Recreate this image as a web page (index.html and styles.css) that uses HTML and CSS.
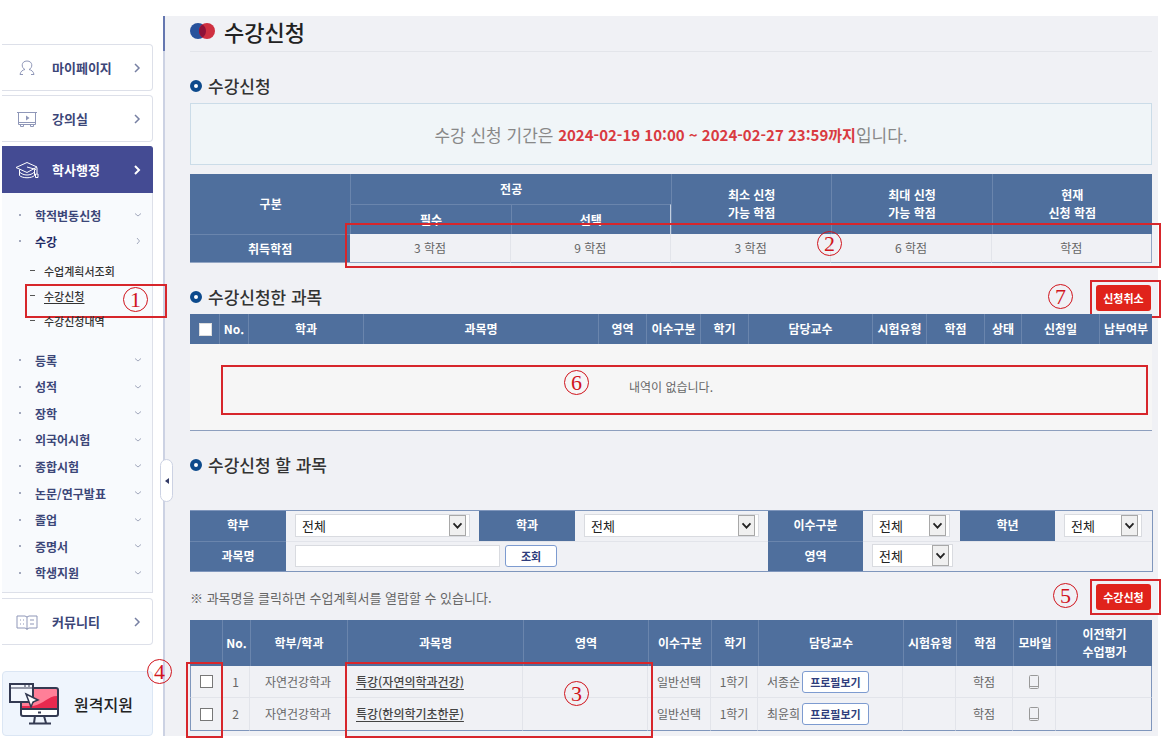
FILE: index.html
```html
<!DOCTYPE html>
<html lang="ko">
<head>
    <meta charset="UTF-8">
    <title>수강신청</title>
    <link rel="stylesheet" href="styles.css">
</head>
<body>
    <div class="page">
        <nav class="sidebar">
            <a href="#" class="menu-item">
                <svg class="menu-icon" viewBox="0 0 24 20"><path d="M10 11.500C6 10 6 3 12 3s6 7 2 8.500c2.500.5 4.500 2 5 5h-3M10 11.500c-2.500.5-4.500 2-5 5h3"/></svg>
                <span class="menu-text">마이페이지</span>
                <svg class="arrow" viewBox="0 0 8 10"><path d="M2 1l4 4-4 4"/></svg>
            </a>
            <a href="#" class="menu-item">
                <svg class="menu-icon" viewBox="0 0 24 20"><path d="M3.500 3.500h17v12h-17zM2 3.500h20M5.500 15.500v2h3v-2M15.500 15.500v2h3v-2M3.500 13.500h17"/><path class="solid" d="M11 6.500l3.500 2.500-3.500 2.500z"/></svg>
                <span class="menu-text">강의실</span>
                <svg class="arrow" viewBox="0 0 8 10"><path d="M2 1l4 4-4 4"/></svg>
            </a>
            <a href="#" class="menu-item active">
                <svg class="menu-icon" viewBox="0 0 24 20"><path d="M1 7.500L12 2.500l10 4.500-10 5.500zM4.500 9.500v6c3 3 12 3 15 0v-6M22 7.500v6M20.500 14h2.500v3.500h-2.500zM12 7l9 2.500M4.500 12c4 4 11 4 15 0"/></svg>
                <span class="menu-text">학사행정</span>
                <svg class="arrow" viewBox="0 0 8 10"><path d="M2 1l4 4-4 4"/></svg>
            </a>
            <div class="submenu">
                <ul class="sub-top">
                    <li><a href="#">학적변동신청</a><svg class="chev" viewBox="0 0 8 6"><path d="M1 1.500l3 2.500 3-2.500"/></svg></li>
                    <li class="open"><a href="#">수강</a><svg class="chev" viewBox="0 0 8 6"><path d="M3 0l2.500 3L3 6"/></svg></li>
                </ul>
                <ul class="sub-detail">
                    <li><a href="#">수업계획서조회</a></li>
                    <li class="current"><a href="#">수강신청</a><div class="mark mark1"><span class="num num1">1</span></div></li>
                    <li><a href="#">수강신청내역</a></li>
                </ul>
                <ul class="sub-list">
                    <li><a href="#">등록</a><svg class="chev" viewBox="0 0 8 6"><path d="M1 1.500l3 2.500 3-2.500"/></svg></li>
                    <li><a href="#">성적</a><svg class="chev" viewBox="0 0 8 6"><path d="M1 1.500l3 2.500 3-2.500"/></svg></li>
                    <li><a href="#">장학</a><svg class="chev" viewBox="0 0 8 6"><path d="M1 1.500l3 2.500 3-2.500"/></svg></li>
                    <li><a href="#">외국어시험</a><svg class="chev" viewBox="0 0 8 6"><path d="M1 1.500l3 2.500 3-2.500"/></svg></li>
                    <li><a href="#">종합시험</a><svg class="chev" viewBox="0 0 8 6"><path d="M1 1.500l3 2.500 3-2.500"/></svg></li>
                    <li><a href="#">논문/연구발표</a><svg class="chev" viewBox="0 0 8 6"><path d="M1 1.500l3 2.500 3-2.500"/></svg></li>
                    <li><a href="#">졸업</a><svg class="chev" viewBox="0 0 8 6"><path d="M1 1.500l3 2.500 3-2.500"/></svg></li>
                    <li><a href="#">증명서</a><svg class="chev" viewBox="0 0 8 6"><path d="M1 1.500l3 2.500 3-2.500"/></svg></li>
                    <li><a href="#">학생지원</a><svg class="chev" viewBox="0 0 8 6"><path d="M1 1.500l3 2.500 3-2.500"/></svg></li>
                </ul>
            </div>
            <a href="#" class="menu-item">
                <svg class="menu-icon" viewBox="0 0 24 20"><path d="M12 5v13M2 4h8l2 1 2-1h8v12h-8l-2 1-2-1H2zM5 8h1M8 8h1M5 12h1M8 12h1M15 8h4M15 12h4"/></svg>
                <span class="menu-text">커뮤니티</span>
                <svg class="arrow" viewBox="0 0 8 10"><path d="M2 1l4 4-4 4"/></svg>
            </a>
            <a href="#" class="remote">
                <svg class="remote-icon" viewBox="0 0 50 42">
                    <rect x="12" y="5" width="37" height="28" rx="2" fill="#e8294f"/>
                    <path d="M13 6h35v7c-9 0-13 8-24 10H13z" fill="#ff7f98"/>
                    <path d="M12 26h37v5a2 2 0 0 1-2 2H14a2 2 0 0 1-2-2z" fill="#fff"/>
                    <rect x="12" y="5" width="37" height="28" rx="2" fill="none" stroke="#343a52" stroke-width="2"/>
                    <path d="M12 26h37M29 29.500h3M26 33l-1 7M35 33l2 7M20 40.500h22" fill="none" stroke="#343a52" stroke-width="2"/>
                    <path d="M1 1h23v18H1z" fill="#f4f7fd" stroke="#343a52" stroke-width="2"/>
                    <path d="M1 5h23M15 3h2M19 3h2" stroke="#343a52"/>
                    <path d="M17 11l12 6-5 2-2 5z" fill="#fff" stroke="#343a52" stroke-width="1.500"/>
                </svg>
                <span>원격지원</span>
            </a>
            <button type="button" class="fold" aria-label="메뉴 접기"><svg viewBox="0 0 4 6"><path d="M4 0v6L0 3z"/></svg></button>
        </nav>

        <main class="content">
            <h1>
                <svg class="logo" viewBox="0 0 25 16"><circle cx="8" cy="8" r="8" fill="#28529c"/><circle cx="17" cy="8" r="8" fill="#cf3040"/><path d="M12.500 1.400a8 8 0 0 1 0 13.200a8 8 0 0 1 0-13.200z" fill="#8e1238"/></svg>
                수강신청
            </h1>

            <div class="section-head"><h2>수강신청</h2></div>
            <div class="notice">수강 신청 기간은&nbsp;<strong>2024-02-19 10:00 ~ 2024-02-27 23:59까지</strong>입니다.</div>

            <div class="table-box credit">
                <table>
                    <thead>
                        <tr><th rowspan="2">구분</th><th colspan="2">전공</th><th rowspan="2">최소 신청<br>가능 학점</th><th rowspan="2">최대 신청<br>가능 학점</th><th rowspan="2">현재<br>신청 학점</th></tr>
                        <tr><th>필수</th><th>선택</th></tr>
                    </thead>
                    <tbody>
                        <tr><th>취득학점</th><td>3 학점</td><td>9 학점</td><td>3 학점</td><td>6 학점</td><td>학점</td></tr>
                    </tbody>
                </table>
                <div class="mark mark2"><span class="num num2">2</span></div>
            </div>

            <div class="section-head">
                <h2>수강신청한 과목</h2>
                <div class="btn-box"><button type="button" class="btn-red">신청취소</button><div class="mark mark7"><span class="num num7">7</span></div></div>
            </div>
            <div class="table-box applied">
                <table>
                    <colgroup><col width="29"><col width="29"><col width="115"><col width="235"><col width="48"><col width="54"><col width="48"><col width="124"><col width="54"><col width="58"><col width="37"><col width="78"><col width="53"></colgroup>
                    <thead>
                        <tr><th><input type="checkbox" aria-label="전체 선택"></th><th>No.</th><th>학과</th><th>과목명</th><th>영역</th><th>이수구분</th><th>학기</th><th>담당교수</th><th>시험유형</th><th>학점</th><th>상태</th><th>신청일</th><th>납부여부</th></tr>
                    </thead>
                    <tbody>
                        <tr><td colspan="13">내역이 없습니다.</td></tr>
                    </tbody>
                </table>
                <div class="mark mark6"><span class="num num6">6</span></div>
            </div>

            <div class="section-head"><h2>수강신청 할 과목</h2></div>
            <form class="search">
                <table>
                    <colgroup><col width="96"><col width="193"><col width="96"><col width="193"><col width="95"><col width="97"><col width="95"><col width="97"></colgroup>
                    <tr>
                        <th><label for="dept">학부</label></th>
                        <td><span class="select wide"><select id="dept"><option>전체</option></select><svg viewBox="0 0 17 21"><path d="M4 8l4.500 5L13 8"/></svg></span></td>
                        <th><label for="major">학과</label></th>
                        <td><span class="select wide"><select id="major"><option>전체</option></select><svg viewBox="0 0 17 21"><path d="M4 8l4.500 5L13 8"/></svg></span></td>
                        <th><label for="type">이수구분</label></th>
                        <td><span class="select"><select id="type"><option>전체</option></select><svg viewBox="0 0 17 21"><path d="M4 8l4.500 5L13 8"/></svg></span></td>
                        <th><label for="grade">학년</label></th>
                        <td><span class="select"><select id="grade"><option>전체</option></select><svg viewBox="0 0 17 21"><path d="M4 8l4.500 5L13 8"/></svg></span></td>
                    </tr>
                    <tr>
                        <th><label for="subject">과목명</label></th>
                        <td colspan="3"><div class="search-row"><input type="text" id="subject"><button type="button" class="btn-line">조회</button></div></td>
                        <th><label for="area">영역</label></th>
                        <td colspan="3"><span class="select area"><select id="area"><option>전체</option></select><svg viewBox="0 0 17 21"><path d="M4 8l4.500 5L13 8"/></svg></span></td>
                    </tr>
                </table>
            </form>

            <div class="guide">
                <p>※ 과목명을 클릭하면 수업계획서를 열람할 수 있습니다.</p>
                <div class="btn-box"><button type="button" class="btn-red">수강신청</button><div class="mark mark5"><span class="num num5">5</span></div></div>
            </div>
            <div class="table-box courses">
                <table>
                    <colgroup><col width="32"><col width="28"><col width="97"><col width="176"><col width="125"><col width="63"><col width="47"><col width="145"><col width="53"><col width="57"><col width="43"><col width="96"></colgroup>
                    <thead>
                        <tr><th></th><th>No.</th><th>학부/학과</th><th>과목명</th><th>영역</th><th>이수구분</th><th>학기</th><th>담당교수</th><th>시험유형</th><th>학점</th><th>모바일</th><th>이전학기<br>수업평가</th></tr>
                    </thead>
                    <tbody>
                        <tr><td><input type="checkbox" aria-label="특강(자연의학과건강) 선택"></td><td>1</td><td>자연건강학과</td><td class="left"><a href="#">특강(자연의학과건강)</a></td><td></td><td>일반선택</td><td>1학기</td><td class="left"><div class="prof">서종순<button type="button" class="btn-line">프로필보기</button></div></td><td></td><td>학점</td><td><svg class="mobile" viewBox="0 0 10 14"><rect x=".5" y=".5" width="9" height="13" rx="1"/><path d="M1 11.500h8"/></svg></td><td></td></tr>
                        <tr><td><input type="checkbox" aria-label="특강(한의학기초한문) 선택"></td><td>2</td><td>자연건강학과</td><td class="left"><a href="#">특강(한의학기초한문)</a></td><td></td><td>일반선택</td><td>1학기</td><td class="left"><div class="prof">최윤희<button type="button" class="btn-line">프로필보기</button></div></td><td></td><td>학점</td><td><svg class="mobile" viewBox="0 0 10 14"><rect x=".5" y=".5" width="9" height="13" rx="1"/><path d="M1 11.500h8"/></svg></td><td></td></tr>
                    </tbody>
                </table>
                <div class="mark mark3"><span class="num num3">3</span></div>
                <div class="mark mark4"><span class="num num4">4</span></div>
            </div>
        </main>
    </div>
</body>
</html>
```
FILE: styles.css
```css
*, *::before, *::after {
    box-sizing: border-box;
}
body {
    margin: 0;
    padding: 16px 12px 12px 0;
    background: #fff;
    font-family: "Noto Sans CJK KR", sans-serif;
    font-size: 12px;
    color: #666;
}
h1, h2, p, ul {
    margin: 0;
    padding: 0;
}
ul {
    list-style: none;
}
a {
    color: inherit;
    text-decoration: none;
}
button, input, select {
    font-family: inherit;
    margin: 0;
}
.page {
    display: flex;
}

/* sidebar */
.sidebar {
    position: relative;
    flex: none;
    width: 165px;
    padding: 28px 10px 0 2px;
    border-right: 2px solid #ccd2e3;
    color: #3c4678;
}
.sidebar::after {
    content: "";
    position: absolute;
    top: 0;
    right: -2px;
    width: 2px;
    height: 35px;
    background: #6577b0;
}
.menu-item {
    display: flex;
    align-items: center;
    height: 47px;
    margin-bottom: 4px;
    padding: 0 11px 0 13px;
    border: 1px solid #dde0e9;
    border-left: 0;
    border-radius: 0 4px 4px 0;
    font-size: 13px;
    font-weight: 700;
}
.menu-item.active {
    margin-bottom: 0;
    background: #444b93;
    border-color: #444b93;
    border-radius: 0 3px 0 0;
    color: #fff;
}
.menu-icon {
    width: 24px;
    height: 20px;
    fill: none;
    stroke: #8f97b8;
}
.menu-icon .solid {
    fill: #8f97b8;
    stroke: none;
}
.active .menu-icon {
    stroke: #fff;
}
.menu-text {
    flex: 1;
    padding-left: 13px;
}
.arrow {
    width: 8px;
    height: 10px;
    fill: none;
    stroke: #7780a3;
    stroke-width: 1.5;
}
.active .arrow {
    stroke: #fff;
    stroke-width: 2;
}
.submenu {
    margin-bottom: 5px;
    padding: 9px 10px 6px 17px;
    background: #f8fafd;
    border: 1px solid #dde0e9;
    border-top: 0;
    border-left: 0;
}
.sub-top, .sub-list {
    display: grid;
    grid-auto-rows: 1fr;
    font-weight: 700;
}
.sub-top {
    height: 52px;
}
.sub-list {
    height: 239px;
}
.sub-top li, .sub-list li {
    display: flex;
    align-items: center;
}
.sub-top li::before, .sub-list li::before {
    content: "";
    width: 2px;
    height: 2px;
    margin-right: 14px;
    background: #a3a9bd;
}
.sub-top .open {
    color: #1f2a66;
}
.chev {
    width: 8px;
    height: 6px;
    margin-left: auto;
    fill: none;
    stroke: #a3a9bd;
}
.sub-detail {
    padding: 4px 0 14px 11px;
    font-size: 11px;
    font-weight: 500;
    color: #333;
}
.sub-detail li {
    position: relative;
    display: flex;
    align-items: center;
    height: 25px;
}
.sub-detail li::before {
    content: "";
    width: 5px;
    height: 1px;
    margin-right: 9px;
    background: #555;
}
.sub-detail .current a {
    text-decoration: underline;
    text-underline-offset: 2px;
}
.remote {
    display: flex;
    align-items: center;
    gap: 15px;
    height: 65px;
    margin-top: 26px;
    padding-left: 6px;
    background: #eff5fd;
    border: 1px solid #dbe6f4;
    border-radius: 4px;
    font-size: 16px;
    font-weight: 500;
    color: #222;
}
.remote-icon {
    width: 50px;
    height: 42px;
}
.fold {
    position: absolute;
    top: 443px;
    right: -10px;
    z-index: 1;
    width: 13px;
    height: 43px;
    padding: 0;
    background: #fff;
    border: 1px solid #ccd2e3;
    border-radius: 7px;
}
.fold svg {
    display: block;
    width: 4px;
    height: 6px;
    margin: auto;
    fill: #333b66;
}

/* content */
.content {
    flex: 1;
    min-width: 0;
    padding: 0 6px 5px 25px;
    background: #f0f1f5;
}
h1 {
    display: flex;
    align-items: center;
    gap: 9px;
    height: 36px;
    padding-bottom: 6px;
    border-bottom: 1px solid #e3e5ea;
    font-size: 22px;
    font-weight: 500;
    color: #222;
}
.logo {
    width: 25px;
    height: 16px;
}
.section-head {
    display: flex;
    align-items: center;
    justify-content: space-between;
    height: 26px;
    margin: 22px 0 3px;
}
h2 {
    display: flex;
    align-items: center;
    gap: 6px;
    height: 24px;
    padding-bottom: 2px;
    font-size: 17px;
    font-weight: 500;
    line-height: 22px;
    color: #333;
}
h2::before {
    content: "";
    width: 12px;
    height: 12px;
    border: 4px solid #0d4a8c;
    border-radius: 50%;
    background: #fff;
}
.notice {
    display: flex;
    align-items: center;
    justify-content: center;
    height: 62px;
    margin-bottom: 9px;
    background: #f0f5f8;
    border: 1px solid #cbdce8;
    font-size: 17px;
    color: #888;
}
.notice strong {
    font-size: 15px;
    font-weight: 700;
    color: #d93a40;
}

/* tables */
.table-box {
    position: relative;
}
table {
    width: 100%;
    table-layout: fixed;
    border-spacing: 0;
}
th, td {
    padding: 0;
    text-align: center;
    line-height: 18px;
    white-space: nowrap;
}
th {
    background: #4f6f9d;
    color: #fff;
    font-weight: 700;
}
thead th {
    border-left: 1px solid #6a85ad;
}
thead tr:first-child th:first-child {
    border-left-color: #4f6f9d;
}
.credit th, .credit td {
    height: 30px;
}
.credit thead tr + tr th {
    border-top: 1px solid #6a85ad;
}
.credit thead tr + tr th:last-child {
    border-right: 1px solid #c3cfdf;
}
.credit tbody th, .credit tbody td {
    height: 29px;
    border-bottom: 1px solid #93a6c4;
}
.credit tbody th {
    border-top: 1px solid #6a85ad;
}
.credit tbody td {
    border-right: 1px solid #e2e4ea;
}
.credit tbody td:last-child {
    border-right-color: #93a6c4;
}
.applied th {
    height: 30px;
}
.applied td {
    height: 87px;
    background: #f6f6f6;
    border-bottom: 1px solid #8d9fbe;
}
.search {
    margin: 31px 0 12px;
}
.search table {
    border: 1px solid #7f96bc;
    border-left: 0;
}
.search th, .search td {
    height: 30px;
}
.search th {
    padding-bottom: 2px;
}
.search tr + tr th {
    border-top: 1px solid #6a85ad;
}
.search tr + tr td {
    border-top: 1px solid #e2e4ea;
}
.search td {
    padding: 0 0 2px 9px;
    text-align: left;
}
.select {
    position: relative;
    display: block;
    width: 78px;
    height: 23px;
}
.select.wide {
    width: 175px;
}
.select.area {
    width: 81px;
}
.select select {
    display: block;
    width: 100%;
    height: 23px;
    padding: 0 6px;
    appearance: none;
    background: #fff;
    border: 1px solid #d9dbe0;
    border-radius: 0;
    font-size: 13px;
    color: #222;
}
.select svg {
    position: absolute;
    top: 1px;
    right: 4px;
    width: 17px;
    height: 21px;
    background: #f0f0f0;
    border: 1px solid #a8a8a8;
    fill: none;
    stroke: #222;
    stroke-width: 2;
    pointer-events: none;
}
.search-row {
    display: flex;
    gap: 5px;
}
.search-row input {
    width: 205px;
    height: 22px;
    background: #fff;
    border: 1px solid #d9dbe0;
}
.search-row .btn-line {
    width: 52px;
}
.guide {
    display: flex;
    align-items: center;
    justify-content: space-between;
    height: 26px;
    margin-bottom: 10px;
    font-size: 13px;
}
.courses th {
    height: 46px;
}
.courses td {
    height: 32px;
    border-right: 1px solid #e2e4ea;
    border-bottom: 1px solid #e2e4ea;
}
.courses td:first-child {
    border-left: 1px solid #7f96bc;
}
.courses td:last-child {
    border-right-color: #7f96bc;
}
.courses tr:last-child td {
    height: 33px;
    border-bottom-color: #7f96bc;
}
.courses .left {
    padding-left: 9px;
    text-align: left;
}
.courses a {
    font-weight: 500;
    color: #444;
    text-decoration: underline;
    text-underline-offset: 2px;
}
.prof {
    display: flex;
    align-items: center;
    gap: 2px;
}
.mobile {
    display: block;
    width: 10px;
    height: 14px;
    margin: auto;
    fill: none;
    stroke: #999;
}
input[type="checkbox"] {
    display: block;
    width: 13px;
    height: 13px;
    margin: 0 auto;
    appearance: none;
    background: #fff;
    border: 1px solid #777;
}
.applied input[type="checkbox"] {
    border-color: #ddd;
}

/* buttons */
.btn-box {
    position: relative;
    padding-right: 1px;
}
.btn-red {
    display: block;
    width: 55px;
    height: 26px;
    padding: 0;
    background: #e0231b;
    border: 0;
    border-radius: 3px;
    font-size: 11px;
    font-weight: 700;
    color: #fff;
}
.btn-line {
    height: 22px;
    padding: 0 7px;
    background: #fff;
    border: 1px solid #7d9bd0;
    border-radius: 3px;
    font-size: 11px;
    font-weight: 700;
    line-height: 18px;
    color: #2f3d7c;
}

/* numbered guide marks */
.mark {
    position: absolute;
    border: 2px solid #d7262b;
    pointer-events: none;
}
.num {
    position: absolute;
    width: 25px;
    height: 25px;
    border: 1px solid #d0141c;
    border-radius: 50%;
    font-family: "Liberation Serif", serif;
    font-size: 22px;
    font-weight: 400;
    line-height: 23px;
    text-align: center;
    color: #d0141c;
}
.mark1 {
    top: 1px;
    left: -5px;
    width: 142px;
    height: 34px;
}
.mark2 {
    top: 49px;
    right: -9px;
    bottom: -5px;
    left: calc(100% / 6 - 5px);
}
.mark3 {
    top: 42px;
    right: 499px;
    bottom: -7px;
    left: 155px;
}
.mark4 {
    top: 42px;
    bottom: -7px;
    left: -4px;
    width: 37px;
}
.mark5, .mark7 {
    top: -5px;
    right: -9px;
    left: -6px;
}
.mark5 {
    bottom: -5px;
}
.mark7 {
    bottom: -7px;
}
.mark6 {
    top: 51px;
    right: 4px;
    bottom: 16px;
    left: 31px;
}
.num1 {
    top: 1px;
    right: 17px;
}
.num2 {
    top: 6px;
    right: 317px;
}
.num3 {
    top: 17px;
    right: 62px;
}
.num4 {
    top: -5px;
    left: -41px;
}
.num5 {
    top: 2px;
    right: 81px;
}
.num6 {
    top: 3px;
    left: 341px;
}
.num7 {
    top: 2px;
    right: 86px;
}
```
